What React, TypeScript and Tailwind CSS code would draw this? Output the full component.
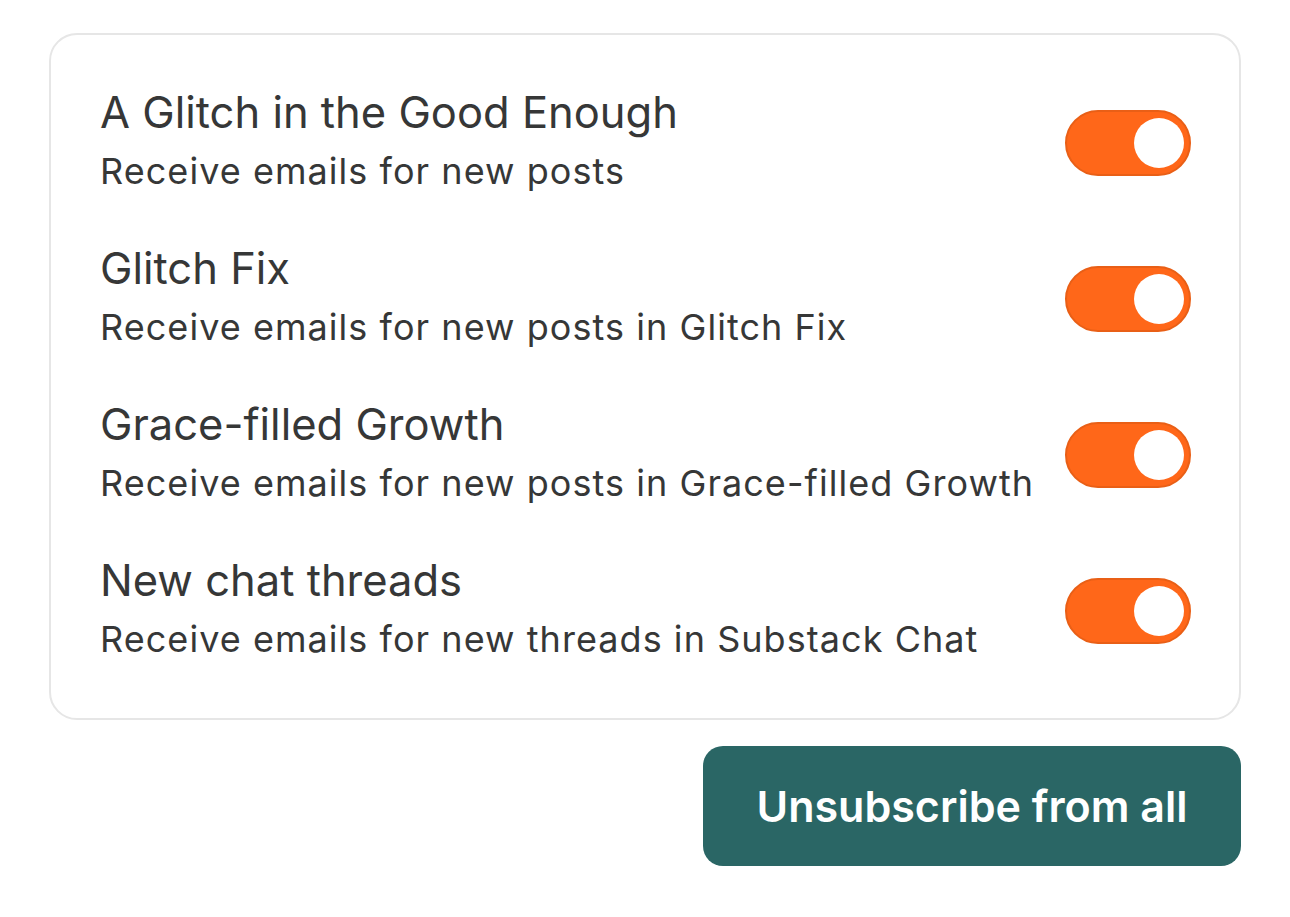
import { useState } from "react";

const ROWS = [
  { title: "A Glitch in the Good Enough", desc: "Receive emails for new posts" },
  { title: "Glitch Fix", desc: "Receive emails for new posts in Glitch Fix" },
  { title: "Grace-filled Growth", desc: "Receive emails for new posts in Grace-filled Growth" },
  { title: "New chat threads", desc: "Receive emails for new threads in Substack Chat" },
];

function Toggle({ on, onClick }: { on: boolean; onClick: () => void }) {
  return (
    <button
      onClick={onClick}
      className={
        "mt-[26px] flex h-[66px] w-[126px] shrink-0 items-center rounded-full border-2 px-[5px] " +
        (on ? "justify-end border-[#e95f16] bg-[#ff6719]" : "justify-start border-[#d4d4d4] bg-[#e5e5e5]")
      }
    >
      <span className="block h-[50px] w-[50px] rounded-full bg-white" />
    </button>
  );
}

export default function App() {
  const [state, setState] = useState([true, true, true, true]);

  return (
    <div
      className="min-h-screen bg-white px-[49px] pt-[33px]"
      style={{ fontFamily: "Inter, 'Noto Sans', sans-serif" }}
    >
      <div className="rounded-[28px] border-2 border-[#e6e6e6] pl-[49px] pr-[48px] pt-[49px] pb-[55px]">
        <div className="flex flex-col gap-[45px]">
          {ROWS.map((r, i) => (
            <div key={r.title} className="flex items-start justify-between">
              <div className="text-[#363737]">
                <div className="text-[43.5px] leading-[56px]">{r.title}</div>
                <div className="mt-[7px] text-[36px] leading-[48px] tracking-[1.05px]">{r.desc}</div>
              </div>
              <Toggle
                on={state[i]}
                onClick={() => setState(state.map((v, j) => (j === i ? !v : v)))}
              />
            </div>
          ))}
        </div>
      </div>
      <div className="mt-[26px] flex justify-end">
        <button className="h-[120px] w-[538px] rounded-[20px] bg-[#2a6665] text-[43px] font-semibold text-white">
          Unsubscribe from all
        </button>
      </div>
    </div>
  );
}
